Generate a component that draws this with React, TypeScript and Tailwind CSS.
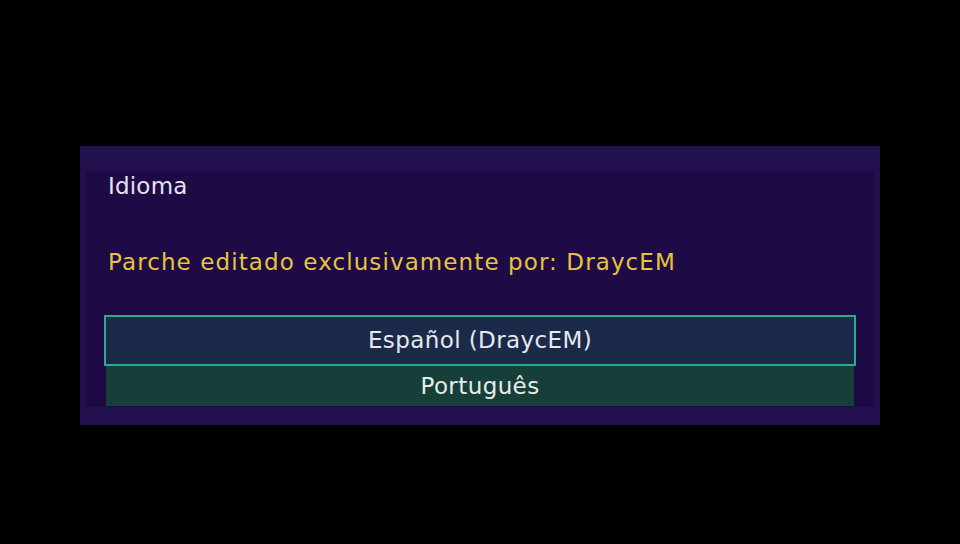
import React from "react";

export default function App() {
  const font = { fontFamily: '"DejaVu Sans", "Noto Sans", sans-serif' };
  return (
    <div className="w-[960px] h-[544px] bg-black flex items-start justify-center pt-[146px]" style={font}>
      <div className="w-[800px] h-[279px] bg-[#22114e] pt-[25px] px-[6px] pb-[18px] flex">
        <div className="flex-1 bg-[#1e0b45] flex flex-col px-[18px]">
          <div className="ml-[4px] text-[#e4e2ee] text-[23px] leading-none mt-[4px] tracking-[0.2px]">Idioma</div>
          <div className="ml-[4px] text-[#e6c43c] text-[23px] leading-none mt-[53px] tracking-[1.1px]">Parche editado exclusivamente por: DraycEM</div>
          <div className="mt-[41px] flex flex-col">
            <div className="h-[51px] border-2 border-[#2da98e] bg-[#1b2a48] flex items-center justify-center text-[#e6e8ee] text-[23px] tracking-[0.4px]">
              Español (DraycEM)
            </div>
            <div className="mx-[2px] h-[40px] bg-[#163f3a] flex items-center justify-center text-[#e6ece8] text-[23px] tracking-[0.4px]">
              Português
            </div>
          </div>
        </div>
      </div>
    </div>
  );
}
